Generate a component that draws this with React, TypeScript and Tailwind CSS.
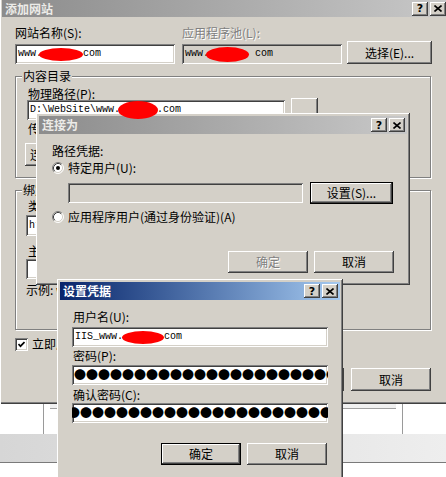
import React from 'react';

const raised =
  'shadow-[inset_-1px_-1px_0_#404040,inset_1px_1px_0_#ffffff,inset_-2px_-2px_0_#808080,inset_2px_2px_0_#d4d0c8]';
const sunken =
  'shadow-[inset_1px_1px_0_#808080,inset_-1px_-1px_0_#ffffff,inset_2px_2px_0_#404040,inset_-2px_-2px_0_#d4d0c8]';
const mono = "font-['Liberation_Mono',monospace] text-[10px] leading-none whitespace-nowrap";
const etched = 'border border-[#808080] shadow-[1px_1px_0_#ffffff,inset_1px_1px_0_#ffffff]';
const dimText = 'text-[#808080] [text-shadow:1px_1px_0_#ffffff]';

function Redact({ className }: { className: string }) {
  return <span className={`inline-block shrink-0 rounded-[50%] bg-[#ff0000] ${className}`} />;
}

function CaptionButtons() {
  return (
    <div className="flex gap-[2px]">
      <div className={`flex h-[14px] w-[16px] items-center justify-center bg-[#d4d0c8] ${raised}`}>
        <span className="font-['DejaVu_Sans',sans-serif] text-[11px] leading-none font-bold text-black">?</span>
      </div>
      <div className={`flex h-[14px] w-[16px] items-center justify-center bg-[#d4d0c8] ${raised}`}>
        <svg width="8" height="7" viewBox="0 0 8 7">
          <path d="M0.5 0.5L7.5 6.5M7.5 0.5L0.5 6.5" stroke="#000" strokeWidth="1.6" />
        </svg>
      </div>
    </div>
  );
}

function TitleBar({ title, active = false, h = 'h-[18px]' }: { title: string; active?: boolean; h?: string }) {
  return (
    <div
      className={`flex shrink-0 items-center justify-between pl-[3px] pr-[2px] ${h} ${
        active ? 'bg-linear-to-r from-[#0a246a] to-[#a6caf0]' : 'bg-linear-to-r from-[#8c8c8c] to-[#c8c8c8]'
      }`}
    >
      <span className={`text-[12px] leading-[14px] font-bold ${active ? 'text-white' : 'text-[#ecebe8]'}`}>{title}</span>
      <CaptionButtons />
    </div>
  );
}

function Btn({
  label,
  className = '',
  isDefault = false,
  disabled = false,
}: {
  label: string;
  className?: string;
  isDefault?: boolean;
  disabled?: boolean;
}) {
  return (
    <div
      className={`flex shrink-0 items-center justify-center bg-[#d4d0c8] whitespace-nowrap ${raised} ${
        isDefault ? 'border border-black' : ''
      } ${disabled ? dimText : ''} ${className}`}
    >
      {label}
    </div>
  );
}

function Field({ children, className = '', gray = false }: { children?: React.ReactNode; className?: string; gray?: boolean }) {
  return (
    <div className={`flex shrink-0 items-center overflow-hidden pl-[3px] ${gray ? 'bg-[#d4d0c8]' : 'bg-white'} ${sunken} ${className}`}>
      {children}
    </div>
  );
}

function Radio({ checked = false }: { checked?: boolean }) {
  return (
    <svg width="12" height="12" viewBox="0 0 12 12" className="shrink-0">
      <circle cx="6" cy="6" r="5" fill="#fff" />
      <path d="M2.11 9.89A5.5 5.5 0 0 1 9.89 2.11" fill="none" stroke="#808080" />
      <path d="M9.89 2.11A5.5 5.5 0 0 1 2.11 9.89" fill="none" stroke="#ffffff" />
      <path d="M2.82 9.18A4.5 4.5 0 0 1 9.18 2.82" fill="none" stroke="#404040" />
      <path d="M9.18 2.82A4.5 4.5 0 0 1 2.82 9.18" fill="none" stroke="#d4d0c8" />
      {checked && <circle cx="6" cy="6" r="2" fill="#000" />}
    </svg>
  );
}

function Check() {
  return (
    <div className={`flex h-[13px] w-[13px] shrink-0 items-center justify-center bg-white ${sunken}`}>
      <svg width="7" height="7" viewBox="0 0 7 7">
        <path d="M0.5 3L2.5 5.2L6.5 1" stroke="#000" strokeWidth="1.7" fill="none" />
      </svg>
    </div>
  );
}

function Group({ title, className, children }: { title: string; className: string; children: React.ReactNode }) {
  return (
    <div className={`relative ${etched} ${className}`}>
      <span className="absolute left-[6px] top-[-8px] bg-[#d4d0c8] px-[1px] leading-[14px]">{title}</span>
      {children}
    </div>
  );
}

function Dots({ shift = false }: { shift?: boolean }) {
  return (
    <span
      className={`font-['Noto_Sans_CJK_SC',sans-serif] text-[12px] leading-none whitespace-nowrap text-black ${
        shift ? '-ml-[7px]' : '-ml-[1px]'
      }`}
    >
      {'●'.repeat(22)}
    </span>
  );
}

function MainDialog() {
  return (
    <div className="h-[404px] w-[450px] bg-[#d4d0c8] px-[2px] shadow-[inset_1px_0_0_#ffffff,inset_0_-1px_0_#404040,inset_0_-2px_0_#808080]">
      <TitleBar title="添加网站" h="h-[17px]" />
      <div className="flex flex-col pl-[13px]">
        <div className="mt-[9px] flex items-end">
          <div className="flex w-[160px] flex-col">
            <span>网站名称(S):</span>
            <Field className="mt-[4px] h-[20px] w-[160px]">
              <span className={mono}>www.</span>
              <Redact className="-ml-[3px] h-[13px] w-[44px]" />
              <span className={mono}>com</span>
            </Field>
          </div>
          <div className="ml-[7px] flex w-[160px] flex-col">
            <span className={dimText}>应用程序池(L):</span>
            <Field gray className="mt-[4px] h-[20px] w-[160px]">
              <span className={mono}>www.</span>
              <Redact className="-ml-[3px] h-[15px] w-[43px]" />
              <span className={`${mono} ml-[6px]`}>com</span>
            </Field>
          </div>
          <Btn className="ml-[5px] h-[23px] w-[85px]" label="选择(E)..." />
        </div>

        <Group title="内容目录" className="mt-[12px] h-[102px] w-[416px]">
          <div className="flex flex-col pl-[11px] pt-[10px]">
            <span className="ml-[1px] leading-[13px]">物理路径(P):</span>
            <div className="-mt-[2px] flex items-start">
              <Field className="mt-[2px] h-[20px] w-[258px]">
                <span className={mono}>{'D:\\WebSite\\www.'}</span>
                <span className="w-[37px] shrink-0" />
                <span className={mono}>.com</span>
              </Field>
              <Btn className="ml-[6px] h-[23px] w-[27px]" label="..." />
            </div>
            <span className="ml-[1px] mt-[1px]">传递身份验证</span>
            <Btn className="-ml-[2px] mt-[7px] h-[23px] w-[78px] justify-start pl-[5px]" label="连接为(C)..." />
          </div>
        </Group>

        <Group title="绑定" className="mt-[12px] h-[140px] w-[416px]">
          <div className="flex flex-col pl-[11px] pt-[8px]">
            <span className="ml-[1px]">类型(T):</span>
            <Field className="-ml-[1px] mt-[2px] h-[21px] w-[110px]">
              <span className={mono}>http</span>
            </Field>
            <span className="ml-[1px] mt-[8px]">主机名(H):</span>
            <Field className="-ml-[1px] mt-[1px] h-[20px] w-[380px]" />
            <span className="-ml-[1px] mt-[4px] whitespace-nowrap">示例: www.contoso.com 或 marketing.contoso.com</span>
          </div>
        </Group>

        <div className="mt-[7px] flex items-center">
          <Check />
          <span className="ml-[4px]">立即启动网站(B)</span>
        </div>

        <div className="mt-[17px] flex w-[416px] justify-end gap-[7px]">
          <Btn className="h-[23px] w-[80px]" label="确定" />
          <Btn className="h-[23px] w-[80px]" label="取消" />
        </div>
      </div>
    </div>
  );
}

function Backdrop() {
  return (
    <div className="flex flex-col">
      <div className="flex h-[30px] bg-white">
        <div className="w-[44px] border-r border-[#9a9a9a]" />
        <div className="ml-[6px] h-[5px] w-[346px] border-b border-[#a0a0a0] bg-[#f0f0f0]" />
        <div className="ml-[6px] flex-1 border-l border-[#9a9a9a]" />
      </div>
      <div className="h-[29px] border-b border-[#7a7a7a] bg-linear-to-r from-[#d6d6d6] to-[#eeeeee]" />
    </div>
  );
}

function ConnectAsDialog() {
  return (
    <div className={`absolute left-[36px] top-[113px] flex h-[172px] w-[374px] flex-col bg-[#d4d0c8] p-[3px] ${raised}`}>
      <TitleBar title="连接为" />
      <div className="flex flex-1 flex-col px-[13px]">
        <span className="mt-[10px]">路径凭据:</span>
        <div className="mt-[3px] flex items-center">
          <Radio checked />
          <span className="ml-[4px]">特定用户(U):</span>
        </div>
        <div className="mt-[8px] flex items-start pl-[16px]">
          <Field gray className="h-[20px] w-[235px]" />
          <Btn isDefault className="-mt-[1px] ml-[7px] h-[22px] w-[83px]" label="设置(S)..." />
        </div>
        <div className="mt-[6px] flex items-center">
          <Radio />
          <span className="ml-[4px]">应用程序用户(通过身份验证)(A)</span>
        </div>
        <div className="mb-[9px] mt-auto flex justify-end gap-[6px]">
          <Btn disabled className="h-[22px] w-[80px]" label="确定" />
          <Btn className="h-[22px] w-[80px]" label="取消" />
        </div>
      </div>
    </div>
  );
}

function CredentialsDialog() {
  return (
    <div className={`absolute left-[57px] top-[279px] flex h-[200px] w-[286px] flex-col bg-[#d4d0c8] p-[3px] ${raised}`}>
      <TitleBar title="设置凭据" active />
      <div className="flex flex-col px-[13px]">
        <span className="mt-[10px]">用户名(U):</span>
        <Field className="-ml-[1px] mt-[3px] h-[20px] w-[256px]">
          <span className={mono}>IIS_www.</span>
          <Redact className="-ml-[1px] h-[13px] w-[42px]" />
          <span className={mono}>com</span>
        </Field>
        <span className="mt-[2px]">密码(P):</span>
        <Field className="-ml-[1px] mt-[2px] h-[20px] w-[256px]">
          <Dots />
        </Field>
        <span className="mt-[3px]">确认密码(C):</span>
        <Field className="-ml-[1px] mt-[1px] h-[20px] w-[256px]">
          <Dots shift />
        </Field>
        <div className="mt-[20px] flex justify-end gap-[6px]">
          <Btn isDefault className="h-[22px] w-[80px]" label="确定" />
          <Btn className="h-[22px] w-[80px]" label="取消" />
        </div>
      </div>
    </div>
  );
}

export default function App() {
  return (
    <div className="relative h-[477px] w-[446px] overflow-hidden bg-white font-['Noto_Sans_CJK_SC',sans-serif] text-[12px] leading-[14px] text-black">
      <MainDialog />
      <Backdrop />
      <ConnectAsDialog />
      <CredentialsDialog />
      <span className="absolute left-[118px] top-[101px] h-[18px] w-[40px] rounded-[50%] bg-[#ff0000]" />
    </div>
  );
}
